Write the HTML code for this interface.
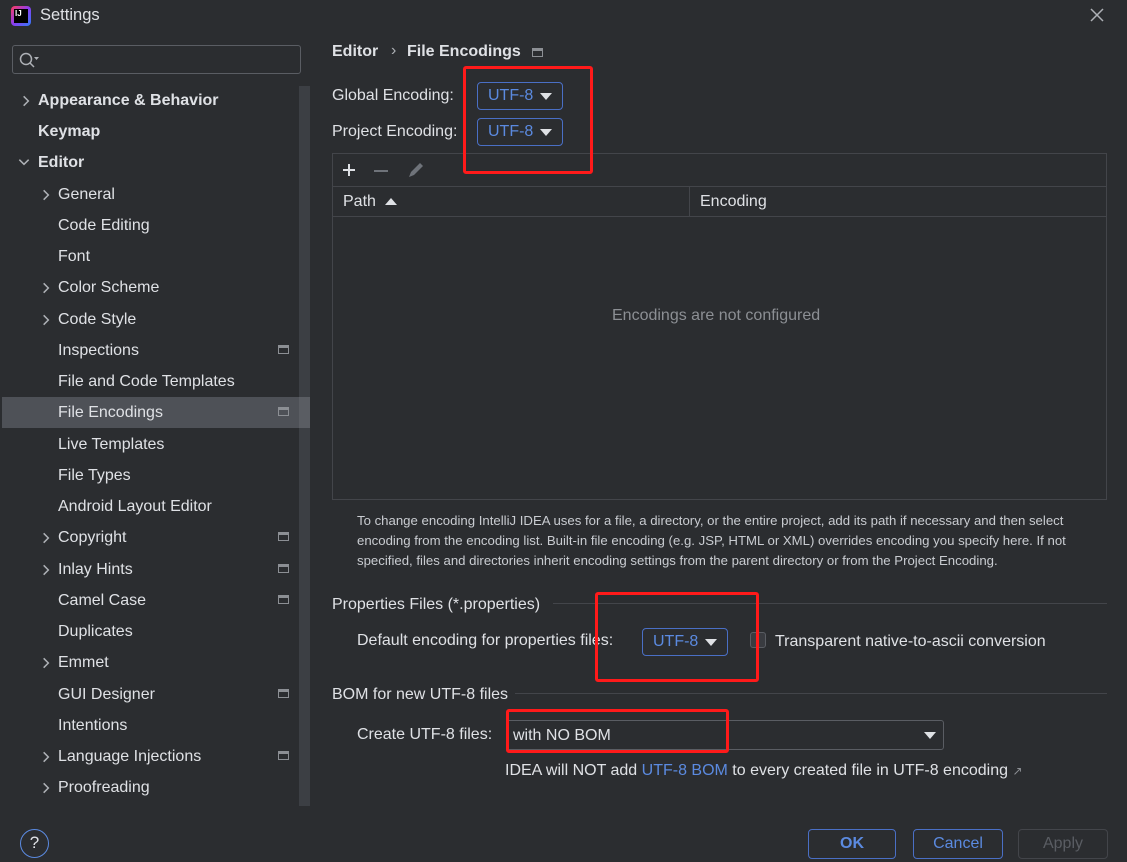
<!DOCTYPE html>
<html><head><meta charset="utf-8"><style>
*{box-sizing:border-box;margin:0;padding:0}
body{width:1127px;height:862px;background:#2b2d30;font-family:"Liberation Sans",sans-serif;color:#dfe1e5;font-size:16px;position:relative;overflow:hidden}
.a{position:absolute;white-space:nowrap}
.it{position:absolute;left:58px;line-height:20px}
.chev{position:absolute}
.b{font-weight:bold}
.ic{position:absolute;left:278px;width:11px;height:9px;border:1.5px solid #8c8f94;border-top-width:3px}
.combo{position:absolute;border:1px solid #4a6fc5;border-radius:4px;color:#5b8ae0;line-height:26px;padding-left:10px}
.tri{position:absolute;width:0;height:0;border-left:6px solid transparent;border-right:6px solid transparent;border-top:7px solid #dfe1e5}
.red{position:absolute;border:3px solid #ff1a1a;border-radius:3px}
.btn{position:absolute;border-radius:4px;height:30px;top:829px;text-align:center;line-height:28px}
</style></head><body>
<svg width="0" height="0" style="position:absolute"><defs><symbol id="cr" viewBox="0 0 12 12"><path d="M4 2l4 4-4 4" fill="none" stroke="#aeb1b6" stroke-width="1.3"/></symbol><symbol id="cd" viewBox="0 0 12 12"><path d="M2 4l4 4 4-4" fill="none" stroke="#aeb1b6" stroke-width="1.3"/></symbol></defs></svg>
<div class="a" style="left:11px;top:6px;width:20px;height:20px;background:linear-gradient(135deg,#ff3b5c,#8a3df0,#2f7bf7);border-radius:4px"></div>
<div class="a" style="left:14px;top:9px;width:14px;height:14px;background:#000;color:#fff;font-size:8px;font-weight:bold;line-height:9px;padding-left:1px">IJ</div>
<div class="a" style="left:40px;top:6px;font-size:16.5px;color:#dfe1e5">Settings</div>
<svg class="a" style="left:1090px;top:8px" width="14" height="14"><path d="M1 1l12 12M13 1L1 13" stroke="#aeb1b6" stroke-width="1.5"/></svg>
<div class="a" style="left:12px;top:45px;width:289px;height:29px;border:1px solid #5a5d63;border-radius:3px"></div>
<svg class="a" style="left:18px;top:51px" width="24" height="18"><circle cx="8" cy="8" r="5.5" fill="none" stroke="#aeb1b6" stroke-width="1.5"/><line x1="12" y1="12" x2="16" y2="16" stroke="#aeb1b6" stroke-width="1.5"/><path d="M16 6h5l-2.5 3z" fill="#aeb1b6"/></svg>
<div class="a" style="left:2px;top:397px;width:308px;height:31px;background:#4e5157"></div>
<div class="a" style="left:299px;top:86px;width:11px;height:720px;background:#3c3f44"></div>
<div class="a" style="left:299px;top:397px;width:11px;height:31px;background:#5a5d63"></div>
<svg class="chev" style="left:19px;top:94px" width="14" height="14"><use href="#cr"/></svg>
<div class="it b" style="left:38px;top:91px">Appearance &amp; Behavior</div>
<div class="it b" style="left:38px;top:122px">Keymap</div>
<svg class="chev" style="left:17px;top:155px" width="14" height="14"><use href="#cd"/></svg>
<div class="it b" style="left:38px;top:153px">Editor</div>
<svg class="chev" style="left:39px;top:188px" width="14" height="14"><use href="#cr"/></svg><div class="it" style="top:185px">General</div>
<div class="it" style="top:216px">Code Editing</div>
<div class="it" style="top:247px">Font</div>
<svg class="chev" style="left:39px;top:281px" width="14" height="14"><use href="#cr"/></svg><div class="it" style="top:278px">Color Scheme</div>
<svg class="chev" style="left:39px;top:313px" width="14" height="14"><use href="#cr"/></svg><div class="it" style="top:310px">Code Style</div>
<div class="it" style="top:341px">Inspections</div><div class="ic" style="top:345px"></div>
<div class="it" style="top:372px">File and Code Templates</div>
<div class="it" style="top:403px">File Encodings</div><div class="ic" style="top:407px"></div>
<div class="it" style="top:435px">Live Templates</div>
<div class="it" style="top:466px">File Types</div>
<div class="it" style="top:497px">Android Layout Editor</div>
<svg class="chev" style="left:39px;top:531px" width="14" height="14"><use href="#cr"/></svg><div class="it" style="top:528px">Copyright</div><div class="ic" style="top:532px"></div>
<svg class="chev" style="left:39px;top:563px" width="14" height="14"><use href="#cr"/></svg><div class="it" style="top:560px">Inlay Hints</div><div class="ic" style="top:564px"></div>
<div class="it" style="top:591px">Camel Case</div><div class="ic" style="top:595px"></div>
<div class="it" style="top:622px">Duplicates</div>
<svg class="chev" style="left:39px;top:656px" width="14" height="14"><use href="#cr"/></svg><div class="it" style="top:653px">Emmet</div>
<div class="it" style="top:685px">GUI Designer</div><div class="ic" style="top:689px"></div>
<div class="it" style="top:716px">Intentions</div>
<svg class="chev" style="left:39px;top:750px" width="14" height="14"><use href="#cr"/></svg><div class="it" style="top:747px">Language Injections</div><div class="ic" style="top:751px"></div>
<svg class="chev" style="left:39px;top:781px" width="14" height="14"><use href="#cr"/></svg><div class="it" style="top:778px">Proofreading</div>
<div class="a" style="left:20px;top:829px;width:29px;height:29px;border:1.5px solid #5b8ae0;border-radius:50%;text-align:center;line-height:26px;font-size:17px;color:#dfe1e5">?</div>
<div class="a b" style="left:332px;top:43px">Editor</div>
<div class="a" style="left:391px;top:42px;color:#aeb1b6">›</div>
<div class="a b" style="left:407px;top:43px">File Encodings</div>
<div class="ic" style="left:532px;top:48px"></div>
<div class="a" style="left:332px;top:87px">Global Encoding:</div>
<div class="combo" style="left:477px;top:82px;width:86px;height:28px">UTF-8</div><div class="tri" style="left:540px;top:93px"></div>
<div class="a" style="left:332px;top:123px">Project Encoding:</div>
<div class="combo" style="left:477px;top:118px;width:86px;height:28px">UTF-8</div><div class="tri" style="left:540px;top:129px"></div>
<div class="a" style="left:332px;top:153px;width:775px;height:347px;border:1px solid #43454a"></div>
<div class="a" style="left:333px;top:186px;width:773px;height:1px;background:#43454a"></div>
<div class="a" style="left:333px;top:216px;width:773px;height:1px;background:#43454a"></div>
<div class="a" style="left:689px;top:187px;width:1px;height:29px;background:#43454a"></div>
<svg class="a" style="left:342px;top:163px" width="14" height="14"><path d="M7 1v12M1 7h12" stroke="#dfe1e5" stroke-width="2"/></svg>
<div class="a" style="left:374px;top:170px;width:14px;height:2px;background:#6f737a"></div>
<svg class="a" style="left:406px;top:160px" width="20" height="20"><path d="M3 17l2-5 9-9 3 3-9 9z" fill="#6f737a"/></svg>
<div class="a" style="left:343px;top:193px">Path</div>
<div class="a" style="left:385px;top:198px;width:0;height:0;border-left:6px solid transparent;border-right:6px solid transparent;border-bottom:7px solid #dfe1e5"></div>
<div class="a" style="left:700px;top:193px">Encoding</div>
<div class="a" style="left:612px;top:307px;color:#8c8f94">Encodings are not configured</div>
<div class="a" style="left:357px;top:511px;font-size:13.2px;line-height:20px;color:#c9ccd1;white-space:normal;width:752px">To change encoding IntelliJ IDEA uses for a file, a directory, or the entire project, add its path if necessary and then select encoding from the encoding list. Built-in file encoding (e.g. JSP, HTML or XML) overrides encoding you specify here. If not specified, files and directories inherit encoding settings from the parent directory or from the Project Encoding.</div>
<div class="a" style="left:332px;top:596px">Properties Files (*.properties)</div>
<div class="a" style="left:553px;top:603px;width:554px;height:1px;background:#43454a"></div>
<div class="a" style="left:357px;top:632px">Default encoding for properties files:</div>
<div class="combo" style="left:642px;top:628px;width:86px;height:28px">UTF-8</div><div class="tri" style="left:705px;top:639px"></div>
<div class="a" style="left:750px;top:632px;width:16px;height:16px;border:1px solid #5a5d63;border-radius:3px;background:#393b40"></div>
<div class="a" style="left:775px;top:633px">Transparent native-to-ascii conversion</div>
<div class="a" style="left:332px;top:686px">BOM for new UTF-8 files</div>
<div class="a" style="left:515px;top:693px;width:592px;height:1px;background:#43454a"></div>
<div class="a" style="left:357px;top:726px">Create UTF-8 files:</div>
<div class="a" style="left:506px;top:720px;width:438px;height:30px;border:1px solid #5a5d63;border-radius:3px"></div>
<div class="a" style="left:513px;top:727px">with NO BOM</div>
<div class="tri" style="left:924px;top:732px"></div>
<div class="a" style="left:505px;top:762px">IDEA will NOT add <span style="color:#5b8ae0">UTF-8 BOM</span> to every created file in UTF-8 encoding <span style="color:#8c8f94;font-size:12px">↗</span></div>
<div class="red" style="left:463px;top:66px;width:130px;height:108px"></div>
<div class="red" style="left:595px;top:592px;width:164px;height:90px"></div>
<div class="red" style="left:506px;top:709px;width:223px;height:44px"></div>
<div class="btn" style="left:808px;width:88px;border:1.5px solid #4a6fc5;color:#5b8ae0;font-weight:bold">OK</div>
<div class="btn" style="left:913px;width:90px;border:1px solid #4a6fc5;color:#5b8ae0">Cancel</div>
<div class="btn" style="left:1018px;width:90px;border:1px solid #43454a;color:#5a5d63">Apply</div>
</body></html>
